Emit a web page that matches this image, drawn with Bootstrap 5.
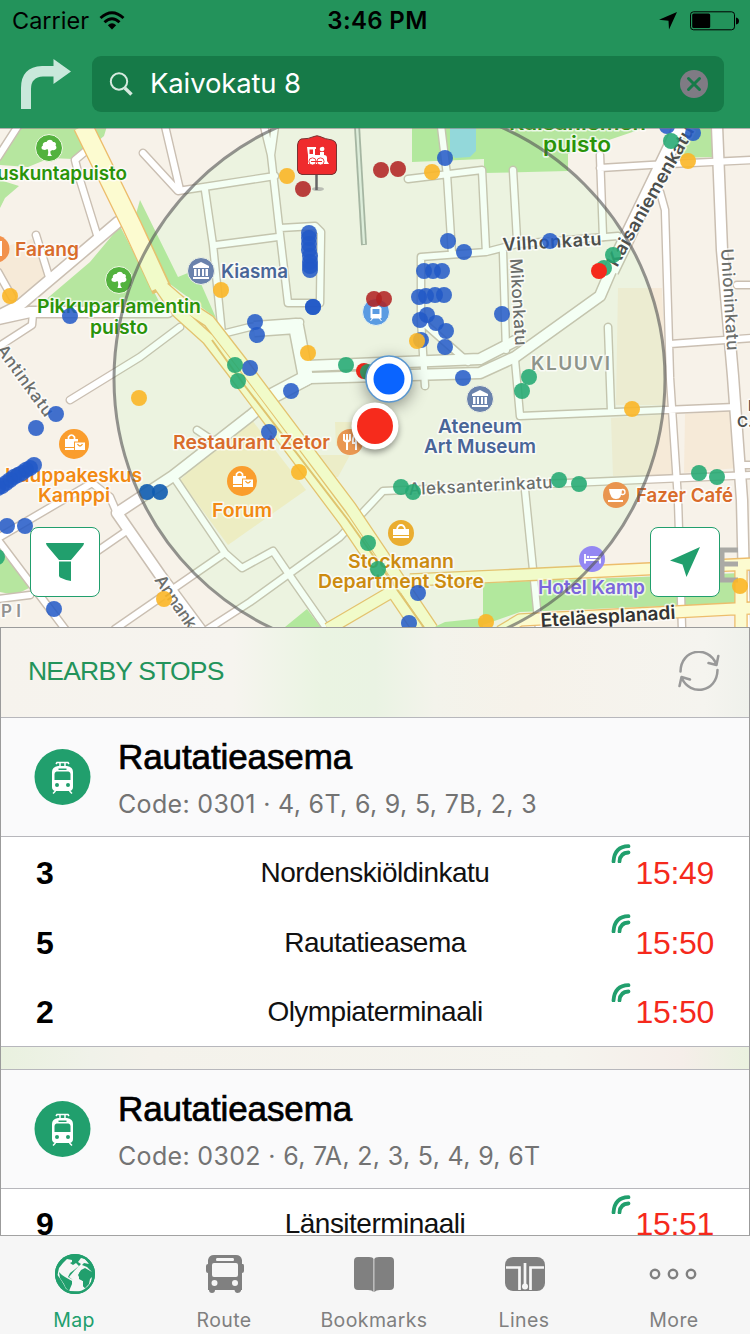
<!DOCTYPE html>
<html lang="en">
<head>
<meta charset="utf-8">
<meta name="viewport" content="width=device-width, initial-scale=1">
<title>Nearby stops</title>
<link href="https://cdn.jsdelivr.net/npm/bootstrap@5.3.0/dist/css/bootstrap.min.css" rel="stylesheet">
<style>
body{width:750px;height:1334px;overflow:hidden;background:#fff;font-family:Inter,sans-serif;color:#000}
svg{display:block;flex:none}
.top-area{height:128px;background:#23935b;flex:none}
.status-row{height:41px;padding:0 11px 0 12px;font-size:23.5px;line-height:41px}
.status-row>div{flex:1 1 0}
.clock{font-weight:600;font-size:24px;text-align:center;letter-spacing:.35px;padding-left:4px}
.search-row{padding:15px 26px 0 20px;gap:21px}
.search-field{height:56px;border-radius:9px;background:#167a48;color:#fff;font-size:27.5px;padding:0 16px 0 17px;letter-spacing:-.15px}
.map-area{height:499px;flex:none;overflow:hidden}
.map-btn{position:absolute;top:399px;width:70px;height:70px;border:1px solid #219f6d;border-radius:8px;background:#fff;padding:0}
.sheet{border:1px solid #9b9b9b;border-bottom:0;overflow:hidden;background:linear-gradient(90deg,#f6f3ed 0,#f6f4ef 31%,#eaf4e2 43%,#eaf3e3 50%,#f3f3eb 58%,#f6f2ea 70%,#f5f4ef 94%,#eff1eb 100%)}
.sheet-title{height:89px;flex:none;padding:0 29px 3px 27px;color:#23935b;font:26.5px "Liberation Sans",sans-serif;letter-spacing:-.8px}
.stop-block{flex:none;border-top:1px solid #b7b7bc;border-bottom:1px solid #b7b7bc;background:#fff;font-family:"Liberation Sans",sans-serif}
.stop-head{height:119px;background:#fafafb;border-bottom:1px solid #b7b7bc;padding-left:33px;gap:28px}
.stop-name{font-size:35px;line-height:42px;-webkit-text-stroke:.7px #000;letter-spacing:-.1px;margin:5px 0 8px -1px}
.stop-code{font:25px/37px Inter,sans-serif;color:#737373;letter-spacing:.33px;margin-left:-1px}
.gap-strip{height:22px;flex:none;background:linear-gradient(90deg,#e9f1df 0,#f0f2e9 12%,#f4f2eb 20%,#f5f4ee 75%,#f5eee9 91%,#eaf1df 100%)}
.dep{height:70px;padding:1px 35px 0}
.dep:last-child{height:69px}
.dep-line{width:117px;font-weight:700;font-size:32px}
.dep-dest{font-size:28px;letter-spacing:-.52px;color:#111}
.dep-time{width:117px;font-size:32px;color:#f5291c;letter-spacing:-.3px;gap:4px}
.live-mark{margin-top:-5px}
.tabs-bar{height:99px;flex:none;background:#f6f6f6;border-top:1px solid #a2a2a2;color:#808080;margin-left:-1px}
.tab-item{width:150px;font-size:19.5px;line-height:24px;padding-top:17px;gap:13px;letter-spacing:.4px}
.tab-item.chosen{color:#219f6d}
.lbl{font-family:Inter,sans-serif;font-weight:600;font-size:19px;paint-order:stroke;stroke:#fffb;stroke-width:3.2px;stroke-linejoin:round}
</style>
</head>
<body class="d-flex flex-column">
<header class="top-area">
  <div class="status-row d-flex align-items-center">
    <div class="d-flex align-items-center gap-2"><span id="carrier" style="margin-right:2px">Carrier</span>
      <svg width="26" height="20" viewBox="0 0 26 20" fill="none" stroke="#000" stroke-width="2.900"><path d="M1.500 7Q13-3.500 24.500 7M5.500 11.200Q13 4.200 20.500 11.200"/><path d="M13 18.500L8.800 14.200Q13 10.500 17.200 14.200Z" fill="#000" stroke="none"/></svg></div>
    <div class="clock">3:46 PM</div>
    <div class="d-flex align-items-center justify-content-end gap-2">
      <svg width="22" height="20" viewBox="0 0 22 20"><path d="M20 1L12 18.500L11.500 9.800L2 8.800Z"/></svg>
      <svg width="52" height="20" viewBox="0 0 52 20"><rect x="3.500" y=".8" width="44" height="18" rx="3" fill="none" stroke="#000"/><rect x="5.200" y="2.500" width="18" height="14.600" rx="1.500"/><path d="M49 6.500Q52 7 52 10T49 13.500Z"/></svg>
    </div>
  </div>
  <div class="search-row d-flex">
    <svg width="51" height="56" viewBox="0 0 51 56"><path d="M1 53V32Q1 11 22 10H33.500V3L51 15.500L33.500 28V20.500H23Q11 21 11 33V53Z" fill="#c9e8db"/></svg>
    <div class="search-field d-flex align-items-center flex-grow-1">
      <svg width="25" height="26" viewBox="0 0 25 26" fill="none" stroke="#d6eadf"><circle cx="10" cy="10.500" r="8.200" stroke-width="2"/><path d="M15.800 17L22.500 23.500" stroke-width="3.400"/></svg>
      <span class="flex-grow-1" style="padding-left:16px">Kaivokatu 8</span>
      <svg width="28" height="28" viewBox="0 0 28 28"><circle cx="14" cy="14" r="14" fill="#7f7b84"/><path d="M8.500 8.500L19.500 19.500M19.500 8.500L8.500 19.500" stroke="#167a48" stroke-width="3" stroke-linecap="round"/></svg>
    </div>
  </div>
</header>

<section class="map-area position-relative">
<svg width="750" height="499" viewBox="0 128 750 499">
  <defs>
    <g id="w8" fill="none" stroke-linejoin="round" stroke-linecap="round">
      <path d="M18 126L-2 157M87 150L75 160L80 180L98 238M36 235L50 280M-2 272L12 297M33 313L32 325L-2 347M180 327L140 357L70 400M165 126L180 190M143 153L178 191L275 176M205 190L213 245L222 334M216 245L278 237M222 334L250 327L300 322"/>
      <path d="M264 126L271 155L275 126M271 155L280 235L288 303H320L321 232L315 226L280 228M441 126L447 175L452 254M408 179L482 170L486 252M421 320L421 257L486 252L517 244L618 236M421 320L425 386M426 325L468 362"/>
      <path d="M513 170L517 240M503 252L506 350M515 360L520 416L735 407M608 327L611 410M600 155L603 237M600 168L650 165L752 160M660 192L665 210L670 378L678 500L682 629M670 344L752 338M737 285H752M742 465H752M525 490L539 629"/>
      <path d="M-2 538L92 483L110 497L117 513M-2 540L65 629M-2 599L30 595M125 532L70 570M197 430L212 440M173 476L225 553L242 568L273 551L288 573L327 629M225 553L115 629M208 629L250 602L340 537L383 491L752 475"/>
    </g>
    <g id="w12" fill="none" stroke-linejoin="round" stroke-linecap="round">
      <path d="M118 222L85 250L20 305L-2 316M-2 319L30 312H168M717 126L722 250L733 376L742 500L745 629M117 513L160 575L200 629M117 513L173 476L250 416L275 395L310 378L480 373L515 357L600 296L612 268M307 366L480 359L515 341"/>
    </g>
    <g id="w16" fill="none" stroke-linejoin="round"><path d="M611 271L682 124M254 329L296 326L306 378L272 396"/></g>
    <g id="y10" fill="none" stroke-linejoin="round"><path d="M158 283L180 302L209 321L240 361L350 507L432 629M158 283L178 312L208 339L232 370L345 521L418 629M410 580L500 576L752 564M500 632L520 620L752 608M741 560V629M328 629L398 588"/></g>
    <g id="tree"><circle r="13.500" fill="#53b23e" stroke="#f4fae8"/><path d="M-1.500 8C-.5 5-.5 3-1.500 1L-4 2C-8 2-8.500-1-6-2.500C-7-5-4-6.500-2.500-6C-1-9 3-9 4-6C7-6 7.500-4 6.500-2.500C9 0 6 3 3.500 2L1.500 3C1 5 2 7 3 8Z" fill="#fff"/></g>
    <g id="museum"><circle r="13.500" fill="#6a82ac" stroke="#eef3e6"/><path d="M0-9L8-5V-3H-8V-5ZM-7-2H-4.500V5H-7ZM-3-2H-1V5H-3ZM1-2H3V5H1ZM4.500-2H7V5H4.500ZM-8 6H8V8H-8Z" fill="#fff"/></g>
    <g id="bags"><circle r="15" fill="#fa9d2d"/><path d="M-9-5H4V-2.500H0V3H-9ZM-9 4H0V6H-9ZM1-1.500H11V6H1Z" fill="#fff"/><path d="M-5.500-5V-7Q-2.500-11 .5-7V-5" fill="none" stroke="#fff" stroke-width="1.700"/><path d="M3.500 0Q6 4 8.500 0" fill="none" stroke="#f39e30" stroke-width="1.300"/></g>
  </defs>
  <rect y="120" width="750" height="520" fill="#f7f2e9"/>
  <g fill="#f6ead8"><path d="M0 248L32 239L49 281L14 303L0 286ZM618 288H662L667 405H616ZM611 418L672 414L676 475L613 476ZM685 414L735 410L737 468L684 473Z"/><path fill="#f8ebc8" d="M180 480L248 415L306 490L228 545Z"/><path fill="#f7ebcf" d="M335 422H352V446H336ZM318 455H350L338 477H332Z"/></g>
  <g fill="#b6e69f"><path d="M18 126H107L104 136L92 146L73 159L50 158L28 167L0 165V153ZM0 180L19 186L5 198L0 208ZM140 200L178 277L195 270L216 318L170 284L136 214ZM120 226L165 313H30L90 262ZM412 126V162L484 159V173L568 171V154L650 126ZM688 126H713V157L677 158ZM0 543L29 588L15 595L0 592ZM483 583L741 573V603L520 612L483 625ZM430 629L445 622L483 618V629ZM285 627L307 609L322 629Z"/></g>
  <path d="M450 126V153L455 158L470 157L476 151V126Z" fill="#94d4e3"/>
  <use href="#w8" stroke="#cabfb2" stroke-width="9"/><use href="#w12" stroke="#cabfb2" stroke-width="13"/><use href="#w16" stroke="#cabfb2" stroke-width="17"/>
  <use href="#w8" stroke="#fff" stroke-width="6.200"/><use href="#w12" stroke="#fff" stroke-width="10"/><use href="#w16" stroke="#fff" stroke-width="14"/>
  <path d="M357 126L364 245" stroke="#a8aea4" stroke-width="6"/><path d="M357 126L364 244" stroke="#e5ebe2" stroke-width="2.400"/>
  <path d="M83 126L132 226L162 290" fill="none" stroke="#edbd6c" stroke-width="20.500"/>
  <use href="#y10" stroke="#edbd6c" stroke-width="13.500"/><use href="#y10" stroke="#fcfbd0" stroke-width="10.900"/>
  <path d="M83 126L132 226L160 287" fill="none" stroke="#fcfbd0" stroke-width="17.800"/>
  <path d="M212 340L245 386L348 520L425 629" fill="none" stroke="#e8be6b" stroke-width="2"/>
  <path d="M720 550H738M720 564H738M720 580H738M722 548V582" stroke="#aaa9a5" stroke-width="5" fill="none"/>
  <circle cx="389.500" cy="379" r="275.500" fill="#96ff96" fill-opacity=".1"/>

  <g id="pins">
    <use href="#tree" x="49" y="148"/><use href="#tree" x="119" y="280"/><use href="#museum" x="201" y="271"/><use href="#museum" x="480" y="399"/><use href="#bags" x="74" y="444"/><use href="#bags" x="242" y="481"/>
    <circle cx="-4" cy="249" r="13.500" fill="#f2924d"/><path d="M0 241H2V256H0Z" fill="#fff"/>
    <circle cx="376" cy="312" r="13.500" fill="#5a9be2" stroke="#e6f2f0"/><path d="M371 308Q376 304 381 308V318H371ZM370.500 321L373 318M381.500 321L379 318" fill="#fff" stroke="#fff"/><path d="M372.500 309H379.500V314H372.500Z" fill="#5a9be2"/>
    <circle cx="350" cy="442" r="13" fill="#e99752"/><path d="M344 434V440Q347 443 350 440V434M347 434V450M356 450V434Q352 438 353 443H356" fill="none" stroke="#fff" stroke-width="2"/>
    <circle cx="401" cy="533" r="13" fill="#eaad30"/><path d="M393 529H409V535H393ZM393 536H409V538H393Z" fill="#fff"/><path d="M397 529Q398 525 401 525T405 529" stroke="#fff" stroke-width="1.800" fill="none"/>
    <circle cx="616" cy="495" r="13" fill="#e9954f"/><path d="M609 489H622Q622 499 616 499T609 489ZM608 500H623V502H608Z" fill="#fff"/><circle cx="622.500" cy="492" r="2.500" fill="none" stroke="#fff" stroke-width="1.300"/>
    <circle cx="592" cy="559" r="13" fill="#9488f3"/><path d="M585 554V563.500M585 560H600M600 563.500V557H590" stroke="#fff" stroke-width="1.800" fill="none"/><circle cx="588" cy="557" r="1.300" fill="#fff"/>
  </g>
  <g class="lbl" fill="#299309">
    <text x="-3" y="180" textLength="130" lengthAdjust="spacingAndGlyphs">uskuntapuisto</text><text x="37" y="313" textLength="164" lengthAdjust="spacingAndGlyphs">Pikkuparlamentin</text><text x="90" y="334" textLength="58" lengthAdjust="spacingAndGlyphs">puisto</text><text x="509" y="130" textLength="137" lengthAdjust="spacingAndGlyphs">Kaisaniemen</text><text x="543" y="152" textLength="68" lengthAdjust="spacingAndGlyphs" font-size="21">puisto</text>
  </g>
  <g class="lbl" fill="#d96c2b"><text x="15" y="256" textLength="64" lengthAdjust="spacingAndGlyphs">Farang</text><text x="173" y="449" textLength="157" lengthAdjust="spacingAndGlyphs">Restaurant Zetor</text><text x="636" y="502" textLength="97" lengthAdjust="spacingAndGlyphs">Fazer Café</text></g>
  <g class="lbl" fill="#f28a13"><text x="5" y="482" textLength="137" lengthAdjust="spacingAndGlyphs">Kauppakeskus</text><text x="38" y="502" textLength="72" lengthAdjust="spacingAndGlyphs">Kamppi</text><text x="212" y="517" textLength="60" lengthAdjust="spacingAndGlyphs">Forum</text></g>
  <g class="lbl" fill="#496598"><text x="221" y="278" textLength="67" lengthAdjust="spacingAndGlyphs">Kiasma</text><text x="438" y="433" textLength="84" lengthAdjust="spacingAndGlyphs">Ateneum</text><text x="424" y="453" textLength="112" lengthAdjust="spacingAndGlyphs">Art Museum</text></g>
  <g class="lbl" fill="#cc8b10"><text x="348" y="568" textLength="106" lengthAdjust="spacingAndGlyphs">Stockmann</text><text x="318" y="588" textLength="166" lengthAdjust="spacingAndGlyphs">Department Store</text></g>
  <text class="lbl" x="538" y="594" textLength="107" lengthAdjust="spacingAndGlyphs" fill="#7b66dc">Hotel Kamp</text>
  <g class="lbl" fill="#4c4f4d">
    <text transform="translate(503 251) rotate(-3.500)" textLength="99" style="font-size:18px">Vilhonkatu</text>
    <text transform="translate(617 268) rotate(-60.500)" textLength="158" lengthAdjust="spacingAndGlyphs" style="font-size:18px">Kaisaniemenkatu</text>
    <text transform="translate(541 627) rotate(-3.500)" textLength="135" lengthAdjust="spacingAndGlyphs" style="font-size:19px" fill="#333">Eteläesplanadi</text>
    <text x="737" y="427" style="font-size:15px">C.L.</text><text x="748" y="411" style="font-size:15px">E</text>
  </g>
  <g class="lbl" fill="#6b6e6b">
    <text transform="translate(510 259) rotate(86.500)" textLength="87" style="font-weight:500;font-size:17px">Mikonkatu</text>
    <text transform="translate(721 249) rotate(86.500)" textLength="102" style="font-weight:500;font-size:17px">Unioninkatu</text>
    <text transform="translate(409 495) rotate(-2.800)" textLength="144" style="font-weight:500;font-size:17px">Aleksanterinkatu</text>
    <text transform="translate(-4 350) rotate(54)" textLength="84" style="font-weight:500;font-size:17px">Antinkatu</text>
    <text transform="translate(154 580) rotate(56)" textLength="86" style="font-weight:500;font-size:17px">Annankatu</text>
    <text x="531" y="370" textLength="79" fill="#8e958b" style="font-size:19px">KLUUVI</text><text x="1" y="617" fill="#929292" textLength="20" style="font-size:17px">PI</text>
  </g>
  <g id="dots"></g>
  <circle cx="389.500" cy="379" r="275.500" fill="none" stroke="#555" stroke-opacity=".62" stroke-width="3"/>
  <ellipse cx="318" cy="189" rx="6" ry="2" fill="#888" opacity=".5"/><path d="M316.500 174V190" stroke="#666" stroke-width="2.500"/>
  <path d="M301 139Q309 139 314 136.500Q317 135 320 136.500Q325 139 332 140Q336 141 336.500 145V170Q336 174 332 174.500H302Q298 174 297.500 170V145Q298 140 301 139Z" fill="#ef2b2d" stroke="#733" stroke-width="1"/>
  <path fill="#fff" fill-rule="evenodd" d="M307 147H316V149H315V155H320V152H324V155Q327 155 327 158V161L329 164H308V155ZM309.500 149.500V154H313V149.500Z"/>
  <path fill="#fff" d="M320 150.500Q319 147 322 147Q324 146 324.500 149Q324 152 321 151Z"/>
  <g fill="#fff" stroke="#ef2b2d" stroke-width=".9"><circle cx="312.500" cy="161.500" r="3.600"/><circle cx="320.500" cy="161.500" r="3.600"/></g><path d="M311 161.500H322" stroke="#ef2b2d"/>
  <g style="filter:drop-shadow(0 4px 8px #0006)"><circle cx="389" cy="379" r="23" fill="#fff" stroke="#5b97cf" stroke-width="1.600"/></g><circle cx="389" cy="379" r="15.500" fill="#0a64ff"/>
  <g style="filter:drop-shadow(0 3px 3px #0006)"><circle cx="375" cy="426" r="23.500" fill="#fff"/></g><circle cx="375" cy="426" r="18" fill="#f62b1c"/>
  <path d="M0 128.400H750" stroke="#777" stroke-opacity=".6"/>
</svg>
<button class="map-btn d-flex align-items-center justify-content-center" style="left:30px" aria-label="Filter"><svg width="40" height="40" viewBox="0 0 40 40" fill="#219f6d"><path d="M1 1H39Q39 3 37 5L26 18H14L3 5Q1 3 1 1ZM14 19.500H26V39Q20 38 15 35.500L14 34Z"/></svg></button>
<button class="map-btn d-flex align-items-center justify-content-center" style="left:650px" aria-label="Locate"><svg width="32" height="32" viewBox="0 0 32 32" fill="#219f6d"><path d="M31 1L17.500 31L13.500 18.500L1 14.500Z"/></svg></button>
</section>

<main class="sheet flex-grow-1 d-flex flex-column" style="min-height:0">
  <div class="sheet-title d-flex align-items-center justify-content-between"><span>NEARBY STOPS</span>
    <svg width="42" height="40" viewBox="0 0 42 40" fill="none" stroke="#999" stroke-width="2.500" stroke-linecap="round" stroke-linejoin="round"><path d="M2.500 20.500C3-2 30-6 38 12.500M30.500 12L38.500 14L40.300 5M39.500 19C39 42 12 45 4 27.500M12 28.500L3.500 26L1.500 35"/></svg></div>
  <section class="stop-block">
    <div class="stop-head d-flex align-items-center"><svg width="57" height="57" viewBox="0 0 57 57"><use href="#tramicon"/></svg><div><div class="stop-name">Rautatieasema</div><div class="stop-code">Code: 0301 · 4, 6T, 6, 9, 5, 7B, 2, 3</div></div></div>
    <div class="dep d-flex align-items-center justify-content-between"><span class="dep-line">3</span><span class="dep-dest">Nordenskiöldinkatu</span><span class="dep-time d-flex justify-content-end"><svg class="live-mark" width="20" height="19" viewBox="0 0 20 19"><use href="#live"/></svg>15:49</span></div>
    <div class="dep d-flex align-items-center justify-content-between"><span class="dep-line">5</span><span class="dep-dest">Rautatieasema</span><span class="dep-time d-flex justify-content-end"><svg class="live-mark" width="20" height="19" viewBox="0 0 20 19"><use href="#live"/></svg>15:50</span></div>
    <div class="dep d-flex align-items-center justify-content-between"><span class="dep-line">2</span><span class="dep-dest">Olympiaterminaali</span><span class="dep-time d-flex justify-content-end"><svg class="live-mark" width="20" height="19" viewBox="0 0 20 19"><use href="#live"/></svg>15:50</span></div>
  </section>
  <div class="gap-strip"></div>
  <section class="stop-block">
    <div class="stop-head d-flex align-items-center"><svg width="57" height="57" viewBox="0 0 57 57"><use href="#tramicon"/></svg><div><div class="stop-name">Rautatieasema</div><div class="stop-code">Code: 0302 · 6, 7A, 2, 3, 5, 4, 9, 6T</div></div></div>
    <div class="dep d-flex align-items-center justify-content-between"><span class="dep-line">9</span><span class="dep-dest">Länsiterminaali</span><span class="dep-time d-flex justify-content-end"><svg class="live-mark" width="20" height="19" viewBox="0 0 20 19"><use href="#live"/></svg>15:51</span></div>
  </section>
</main>

<nav class="tabs-bar d-flex">
  <div class="tab-item chosen d-flex flex-column align-items-center"><svg width="42" height="42" viewBox="0 0 42 42" style="margin-left:2px"><circle cx="21" cy="21" r="20" fill="#219f6d"/><path fill="#f6f6f6" d="M9 10L13 6L18 7L18 9L16 10L19 12L22 10L25 13L20 17L16 20L14 24L19 27L19 33L16 38L12 36L10 32L7 27L3.500 22L5 15ZM27 5L31 6L35 11L30 10L28 12L33 14L36 17L38 19L31 15L27 17L24 22L26 26L29 28L29 33L31 35L35 31L36 26L38 24Q37 36 27 38.500L15 38L19 32V27L15 24L21 17L24 14L27 11L24 9Z"/><path fill="#219f6d" d="M5 19L8 22L11 24L18 28L18 31L15 38Q11 35 10 31L6 25ZM25 20L29 17L34 17L38 23L35 26L35 30L31 35L29 33L29 28L25 26Z"/><circle cx="21" cy="21" r="18.900" fill="none" stroke="#219f6d" stroke-width="2.200"/></svg><span>Map</span></div>
  <div class="tab-item d-flex flex-column align-items-center"><svg width="40" height="42" viewBox="0 0 40 42" style="margin-left:2px"><path fill="currentColor" fill-rule="evenodd" d="M9 2H31Q36 2 37 7V11H38Q39 11 39 13V18Q39 20 37 20V37H36V38Q35 40 32.500 40T29.500 37H10Q10 40 7 40T4 37H3V20Q1 20 1 18V13Q1 11 3 11V7Q4 2 9 2ZM12 5Q11 5 11 6.500T12 8H28Q29 8 29 6.500T28 5ZM9 10Q7 10 7 12V22Q7 24 9 24H31Q33 24 33 22V12Q33 10 31 10ZM9.500 27A3 3 0 1 0 9.500 33A3 3 0 1 0 9.500 27ZM30 27A3 3 0 1 0 30 33A3 3 0 1 0 30 27Z"/></svg><span>Route</span></div>
  <div class="tab-item d-flex flex-column align-items-center"><svg width="40" height="42" viewBox="0 0 40 42" fill="currentColor"><path d="M4 4H15Q19 4 19.500 6V39Q18 37 14 37H4Q0 37 0 33V8Q0 4 4 4ZM36 4H25Q21 4 20.300 6V39Q22 37 26 37H36Q40 37 40 33V8Q40 4 36 4Z"/></svg><span>Bookmarks</span></div>
  <div class="tab-item d-flex flex-column align-items-center"><svg width="42" height="42" viewBox="0 0 42 42" style="margin-left:2px"><rect x="1" y="4" width="40" height="34" rx="8" fill="currentColor"/><path d="M2 14.500H15.500V37M40 14.500H26.500V37M21 10V33" fill="none" stroke="#f6f6f6" stroke-width="2.700"/><circle cx="21" cy="33.500" r="3" fill="#f6f6f6"/></svg><span>Lines</span></div>
  <div class="tab-item d-flex flex-column align-items-center"><svg width="48" height="42" viewBox="0 0 48 42" fill="none" stroke="currentColor" stroke-width="2.400" style="margin-left:-2px"><circle cx="6" cy="21" r="4.200"/><circle cx="24" cy="21" r="4.200"/><circle cx="42" cy="21" r="4.200"/></svg><span>More</span></div>
</nav>

<svg width="0" height="0" class="position-absolute"><defs>
  <g id="live"><path d="M2.500 17.500Q3.500 2.500 17.500 2.200M8.500 17.500Q9 8.800 17.500 8.500" fill="none" stroke="#219f6d" stroke-width="3.800" stroke-linecap="round"/></g>
  <g id="tramicon"><circle cx="28.500" cy="28" r="28" fill="#219f6d"/><path fill="#fff" fill-rule="evenodd" d="M24 17H33Q39 18 39 23V38Q39 41 36 42H21Q18 41 18 38V23Q18 18 24 17ZM24.500 19.500V21H32.500V19.500ZM22.500 22.500Q20.500 23 20.500 25V31H36.500V25Q36.500 23 34.500 22.500ZM23 34A2 2 0 1 0 23 38A2 2 0 1 0 23 34ZM34 34A2 2 0 1 0 34 38A2 2 0 1 0 34 34Z"/><path d="M22 15L23 13.500H34L35 15M26 17V13.500M31 17V13.500M21.500 42L19 44.500M35.500 42L38 44.500" fill="none" stroke="#fff" stroke-width="1.500"/></g>
</defs></svg>
<script>
// Stops and vehicles on the map: colour, opacity, x y pairs
const groups = [
  ['#2158c7', .85, '309 233 309 238 309 244 309 250 310 256 310 262 310 266 310 270 313 307 313 307 445 158 448 241 464 252 424 271 433 271 442 271 419 297 426 296 435 295 444 295 427 315 420 320 436 323 446 331 445 347 421 340 502 314 463 378 550 241 667 126 693 133 255 322 257 335 250 368 291 391 269 432 70 316 56 414 36 428 7 526 25 526 54 609 418 593 409 623'],
  ['#2158c7', .85, '34 465 30 468 26 470 22 473 18 475 14 477 10 480 6 483 2 486 -2 488'],
  ['#0e5bb0', .9, '147 492 160 492'],
  ['#fbb627', .9, '287 176 432 172 221 290 308 353 417 341 10 296 139 398 299 472 164 599 486 622 688 161 632 409 740 586'],
  ['#f5291c', 1, '364 371'],
  ['#23a972', .88, '346 365 368 372 235 365 238 381 401 487 413 492 368 543 378 569 671 141 613 255 604 268 529 377 522 391 559 480 579 484 699 473 717 477 -3 557'],
  ['#b12222', .87, '381 170 398 169 303 189 374 299 384 299'],
  ['#f5291c', 1, '599 271']
];
let marks = '';
for (const [fill, opacity, list] of groups) {
  const n = list.split(' ');
  for (let i = 0; i < n.length; i += 2) marks += `<circle cx="${n[i]}" cy="${n[i + 1]}" r="8" fill="${fill}" fill-opacity="${opacity}"/>`;
}
document.getElementById('dots').innerHTML = marks;
</script>
<script src="https://cdn.jsdelivr.net/npm/bootstrap@5.3.0/dist/js/bootstrap.bundle.min.js"></script>
</body>
</html>
